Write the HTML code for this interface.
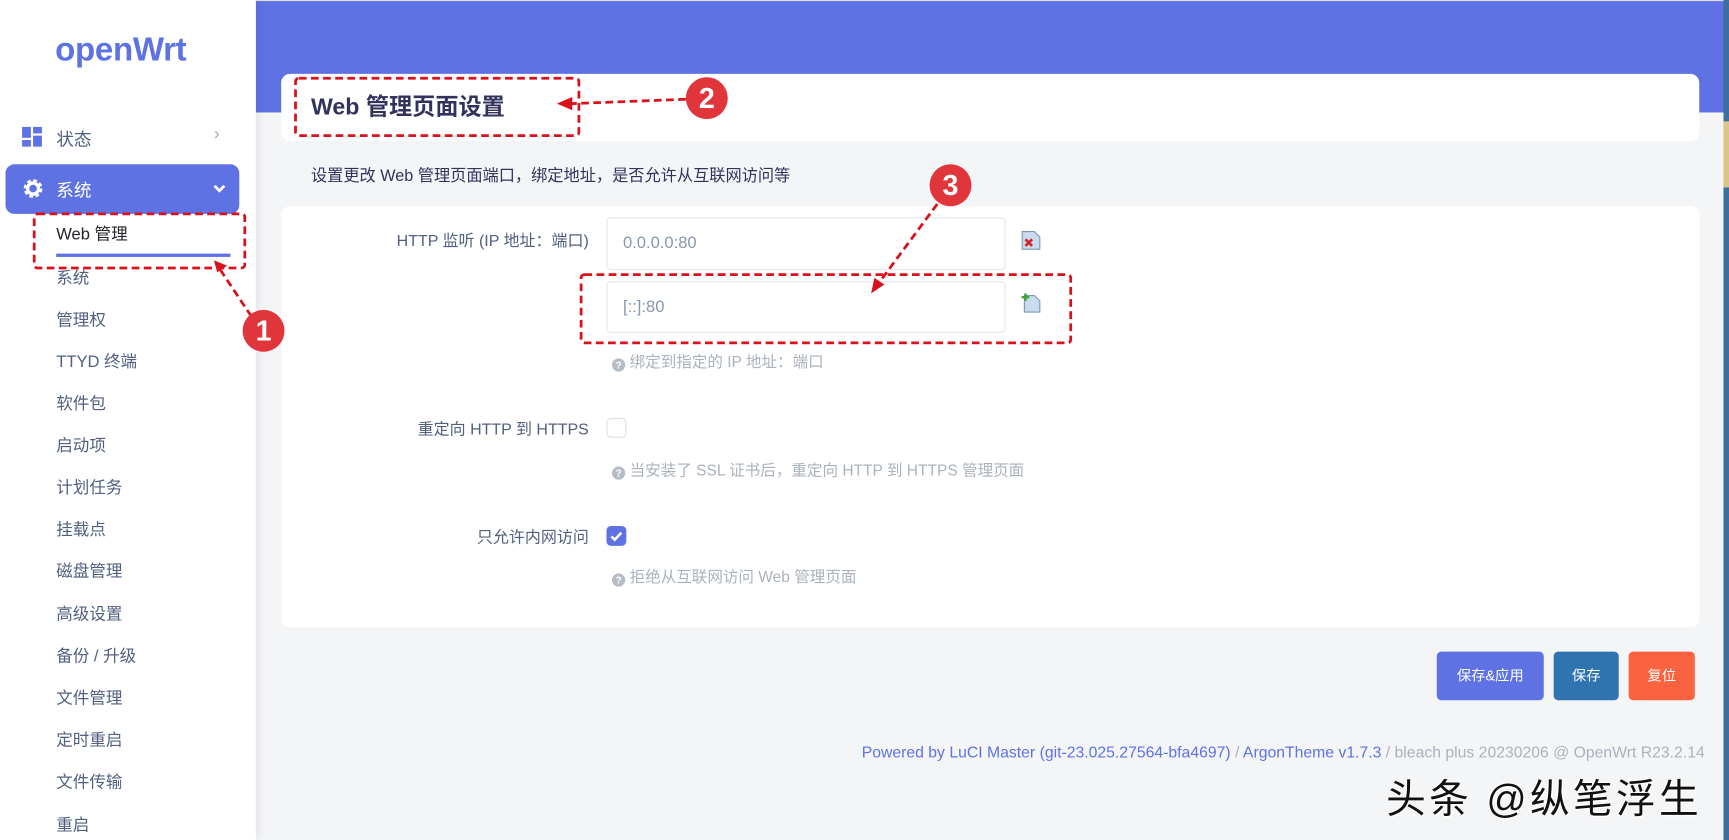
<!DOCTYPE html>
<html><head><meta charset="utf-8">
<style>
*{margin:0;padding:0;box-sizing:border-box}
html,body{width:1729px;height:840px;overflow:hidden;background:#f4f5f7}
#w{position:absolute;left:0;top:0;width:1568px;height:762px;transform:scale(1.10268);transform-origin:0 0;font-family:"Liberation Sans","Noto Sans CJK SC",sans-serif;background:#f4f5f7}
.a{position:absolute;white-space:nowrap}
.side{position:absolute;left:0;top:0;width:232px;height:762px;background:#fff;box-shadow:2px 0 8px rgba(0,0,0,.08)}
.mi{position:absolute;left:51px;font-size:15px;color:#525f7f;line-height:20px}
.card{position:absolute;background:#fff;border-radius:8px}
.inp{position:absolute;left:550px;width:362px;border:1px solid #e3e6ee;border-radius:4px;background:#fff;font-size:15px;color:#8898aa;padding-left:14px}
.lbl{position:absolute;right:1034px;font-size:14.5px;color:#525f7f;text-align:right}
.help{position:absolute;left:555px;font-size:14.1px;color:#aab2bd}
.q{display:inline-block;width:12px;height:12px;border-radius:50%;background:#b6bcc6;color:#fff;font-size:9px;line-height:12px;text-align:center;font-weight:bold;margin-right:4px;vertical-align:-1px}
.btn{position:absolute;top:591px;height:44px;border-radius:4px;color:#fff;font-size:13px;line-height:44px;text-align:center}
</style></head><body><div id="w">
<div class="a" style="left:232px;top:0;width:1336px;height:102px;background:#5e72e4"></div>
<div class="a" style="left:1563px;top:0;width:5px;height:762px;background:#3d6e9c"></div>
<div class="a" style="left:1563px;top:110px;width:5px;height:60px;background:#d9c68a"></div>
<div class="a" style="left:0;top:0;width:1563px;height:1px;background:#ddd"></div>

<div class="side">
 <div class="a" style="left:50px;top:29px;font-size:30px;font-weight:bold;color:#5e72e4;letter-spacing:-0.3px">openWrt</div>
 <svg class="a" style="left:20px;top:115px" width="19" height="19"><rect x="0" y="0" width="8" height="10" fill="#5e72e4"/><rect x="10" y="0" width="8" height="6" fill="#5e72e4"/><rect x="0" y="12" width="8" height="6" fill="#5e72e4"/><rect x="10" y="8" width="8" height="10" fill="#5e72e4"/></svg>
 <div class="a" style="left:51px;top:113px;font-size:16px;color:#525f7f">状态</div>
 <div class="a" style="left:194px;top:113px;font-size:16px;color:#aab;">›</div>
 <div class="a" style="left:5px;top:149px;width:212px;height:45px;border-radius:8px;background:#5e72e4"></div>
 <svg class="a" style="left:21px;top:162px" width="18" height="18" viewBox="0 0 18 18"><circle cx="9" cy="9" r="6.5" fill="none" stroke="#fff" stroke-width="4" stroke-dasharray="3 2.1"/><circle cx="9" cy="9" r="5" fill="none" stroke="#fff" stroke-width="3"/></svg>
 <div class="a" style="left:51px;top:159px;font-size:16px;color:#fff">系统</div>
 <svg class="a" style="left:193px;top:167px" width="12" height="9"><path d="M1.5 1.5L6 6l4.5-4.5" stroke="#fff" stroke-width="2.5" fill="none"/></svg>
 <div class="mi" style="top:203px;color:#212529">Web 管理</div>
 <div class="a" style="left:51px;top:230px;width:158px;height:3px;background:#5e72e4"></div>
 <div class="mi" style="top:243px">系统</div>
 <div class="mi" style="top:281px">管理权</div>
 <div class="mi" style="top:319px">TTYD 终端</div>
 <div class="mi" style="top:357px">软件包</div>
 <div class="mi" style="top:395px">启动项</div>
 <div class="mi" style="top:433px">计划任务</div>
 <div class="mi" style="top:471px">挂载点</div>
 <div class="mi" style="top:509px">磁盘管理</div>
 <div class="mi" style="top:548px">高级设置</div>
 <div class="mi" style="top:586px">备份 / 升级</div>
 <div class="mi" style="top:624px">文件管理</div>
 <div class="mi" style="top:662px">定时重启</div>
 <div class="mi" style="top:700px">文件传输</div>
 <div class="mi" style="top:739px">重启</div>
</div>

<div class="card" style="left:255px;top:67px;width:1286px;height:61px"></div>
<div class="a" style="left:282px;top:81px;font-size:21px;font-weight:bold;color:#32325d">Web 管理页面设置</div>
<div class="a" style="left:282px;top:148px;font-size:14.7px;color:#32325d">设置更改 Web 管理页面端口，绑定地址，是否允许从互联网访问等</div>

<div class="card" style="left:255px;top:187px;width:1286px;height:382px"></div>
<div class="lbl" style="top:207px">HTTP 监听 (IP 地址：端口)</div>
<div class="inp" style="top:197px;height:48px;line-height:46px">0.0.0.0:80</div>
<div class="inp" style="top:255px;height:47px;line-height:45px">[::]:80</div>
<svg class="a" style="left:926px;top:209px" width="18" height="18"><path d="M1 1h11l5 5v11H1z" fill="#c9dcef" stroke="#7d96b3"/><path d="M4 8l6 6M10 8l-6 6" stroke="#d2232a" stroke-width="2.4"/></svg>
<svg class="a" style="left:926px;top:266px" width="18" height="18"><path d="M3 2h9l5 5v10H3z" fill="#c9dcef" stroke="#7d96b3"/><path d="M4 0v7M0.5 3.5h7" stroke="#3aa33a" stroke-width="2.2"/></svg>
<div class="help" style="top:318px"><span class="q">?</span>绑定到指定的 IP 地址：端口</div>
<div class="lbl" style="top:378px">重定向 HTTP 到 HTTPS</div>
<div class="a" style="left:550px;top:379px;width:18px;height:18px;border:1px solid #dde1e7;border-radius:4px;background:#fff"></div>
<div class="help" style="top:416px"><span class="q">?</span>当安装了 SSL 证书后，重定向 HTTP 到 HTTPS 管理页面</div>
<div class="lbl" style="top:476px">只允许内网访问</div>
<div class="a" style="left:550px;top:477px;width:18px;height:18px;border-radius:4px;background:#5e72e4"></div>
<svg class="a" style="left:550px;top:477px" width="18" height="18"><path d="M4.5 9.5l3 3 6-6.5" stroke="#fff" stroke-width="2.4" fill="none"/></svg>
<div class="help" style="top:513px"><span class="q">?</span>拒绝从互联网访问 Web 管理页面</div>

<div class="btn" style="left:1303px;width:97px;background:#5e72e4">保存&amp;应用</div>
<div class="btn" style="left:1409px;width:59px;background:#2f73b0">保存</div>
<div class="btn" style="left:1477px;width:60px;background:#fb6340">复位</div>

<div class="a" style="right:22px;top:675px;font-size:14.3px;color:#aab2bd"><span style="color:#5e72e4">Powered by LuCI Master (git-23.025.27564-bfa4697)</span> / <span style="color:#5e72e4">ArgonTheme v1.7.3</span> / bleach plus 20230206 @ OpenWrt R23.2.14</div>
<div class="a" style="left:1257px;top:696px;font-size:36px;letter-spacing:3px;color:#111;text-shadow:1px 1px 0 #fff,-1px -1px 0 #fff">头条 @纵笔浮生</div>

<svg class="a" style="left:0;top:0" width="1568" height="762">
 <g fill="none" stroke="#d9111b" stroke-width="2.5" stroke-dasharray="7 4">
  <rect x="31" y="194" width="191" height="49" rx="3"/>
  <rect x="268" y="71" width="257" height="52" rx="3"/>
  <rect x="527" y="249" width="444" height="62" rx="3"/>
  <path d="M228 287L200 245"/>
  <path d="M622 90L518 94"/>
  <path d="M850 185L796 258"/>
 </g>
 <g fill="#d9111b">
  <path d="M194 236l12 5-9 6z"/>
  <path d="M505 94l14-6v12z"/>
  <path d="M790 266l3-14 9 6z"/>
 </g>
 <g>
  <circle cx="239" cy="300" r="19" fill="#e0353a"/>
  <circle cx="641" cy="89" r="19" fill="#e0353a"/>
  <circle cx="862" cy="168" r="19" fill="#e0353a"/>
 </g>
 <g fill="#fff" font-family="Liberation Sans" font-size="26" font-weight="bold" text-anchor="middle">
  <text x="239" y="309">1</text><text x="641" y="98">2</text><text x="862" y="177">3</text>
 </g>
</svg>
</div></body></html>
